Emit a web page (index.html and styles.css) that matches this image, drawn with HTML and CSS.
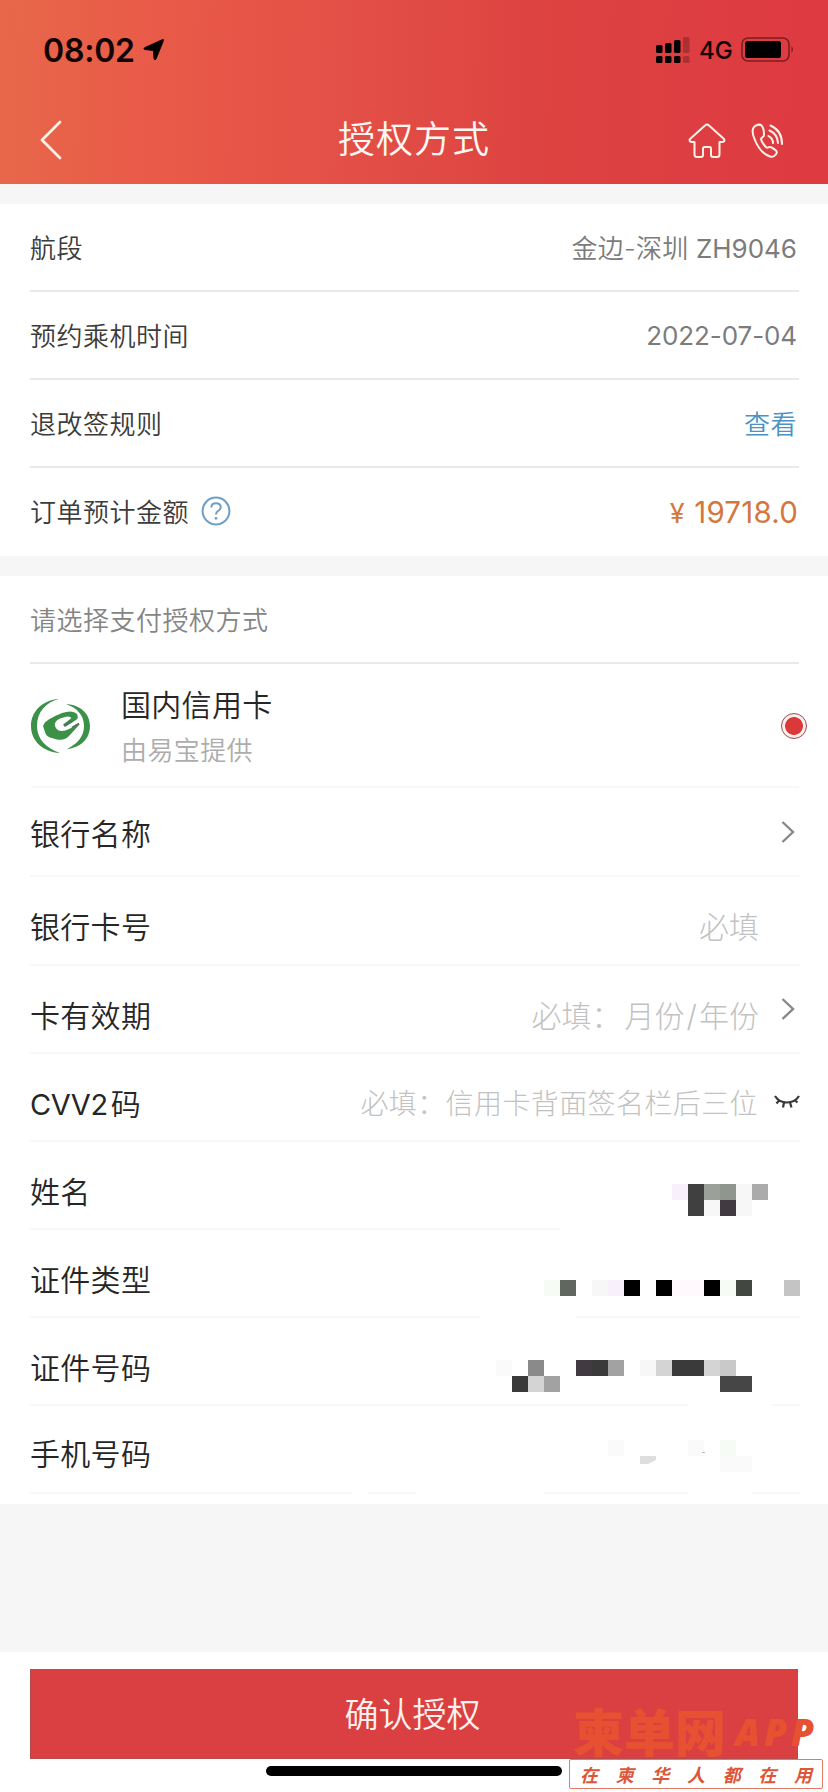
FILE: index.html
```html
<!DOCTYPE html>
<html lang="zh-CN">
<head>
<meta charset="utf-8">
<title>授权方式</title>
<link rel="stylesheet" href="styles.css">
</head>
<body>
<div class="screen">
  <header class="header">
    <div class="status">
      <span class="clock">08:02</span>
      <svg class="locate" width="22" height="22" viewBox="0 0 22 22"><path d="M20.500 1.500 13 20Q11.800 22 11 19.500L10.500 11.500 2 10.500Q0 9.800 1.500 8.800L19 .8Q21.200.200 20.500 1.500Z" stroke="#120303" stroke-width="1"/></svg>
      <svg class="signal" width="34" height="27" viewBox="0 0 34 27"><g><rect x="0" y="8" width="6.500" height="8" rx="1.500"/><rect x="9" y="6" width="6.500" height="10" rx="1.500"/><rect x="18" y="3" width="6.500" height="13" rx="1.500"/><rect x="0" y="19" width="6.500" height="7" rx="1.500"/><rect x="9" y="19" width="6.500" height="7" rx="1.500"/><rect x="18" y="19" width="6.500" height="7" rx="1.500"/></g><g opacity=".22"><rect x="27" y="0" width="6.500" height="16" rx="1.500"/><rect x="27" y="19" width="6.500" height="7" rx="1.500"/></g></svg>
      <span class="network">4G</span>
      <svg class="battery" width="54" height="26" viewBox="0 0 54 26"><rect x="1" y="1" width="47" height="23" rx="6" fill="none" stroke="#7c1d20" stroke-width="1.600"/><rect x="4" y="4" width="36" height="17" rx="2.500"/><path d="M50.500 9Q53.500 12.500 50.500 16Z" fill="#7c1d20"/></svg>
    </div>
    <nav class="nav">
      <svg class="back" width="24" height="42" viewBox="0 0 24 42"><path d="M21 3 3 21 21 39"/></svg>
      <h1 class="title">授权方式</h1>
      <div class="tools">
        <svg width="38" height="36" viewBox="0 0 38 36"><path d="M19 1.500Q20 1.500 21 2.500L36 16Q37.300 18.500 34.500 19H31.500V31.500Q31.500 34 29 34H25Q23 34 23 32V25.500Q23 24 21.500 24H16.500Q15 24 15 25.500V32Q15 34 13 34H9Q6.500 34 6.500 31.500V19H3.500Q.700 18.500 2 16L17 2.500Q18 1.500 19 1.500Z"/></svg>
        <svg width="34" height="36" viewBox="0 0 34 36"><path d="M5 2.500C1 4.500 1 10 3.500 16C7 25 13 31.500 19 33.500C22 34.500 25 32.500 25.800 29.500C26 27.500 24.500 26.500 20.500 24.500C17.500 23 17 25.500 15.500 24.500C13.500 23 10.500 18.500 10 16C10 14 13 14.500 13 12C13 8 12 4 10.500 2.500C9 1.200 7 1.500 5 2.500ZM17.500 13Q22 15.500 22 20M18.500 7.500Q26.500 11 27 20M19.500 2.500Q31 7.500 31 21"/></svg>
      </div>
    </nav>
  </header>

  <section class="panel trip">
    <div class="row"><span>航段</span><span class="value">金边-深圳 <b>ZH9046</b></span></div>
    <div class="row"><span>预约乘机时间</span><span class="value date">2022-07-04</span></div>
    <div class="row"><span>退改签规则</span><a class="link">查看</a></div>
    <div class="row"><span class="with-help">订单预计金额<svg width="30" height="30" viewBox="0 0 30 30"><circle cx="15" cy="15" r="13.400"/><path d="M10.300 11.500Q10.300 7.200 15 7.200Q19.700 7.200 19.700 11.200Q19.700 13.600 17 15Q15 16.200 15 18.600"/><circle class="dot" cx="15" cy="22.300" r="1.400"/></svg></span><span class="amount"><span class="yen">¥</span> 19718.0</span></div>
  </section>

  <section class="panel pay">
    <div class="row heading">请选择支付授权方式</div>
    <div class="method">
      <svg class="logo" width="60" height="56" viewBox="0 0 60 56"><path d="M28 1C12 2 0 13 0 28C0 43 12 54 29 55C15 50 6 41 6 28C6 14 15 4 28 1ZM35 6C50 7 59 16 59 28C59 41 49 50 36 51C46 46 53 39 53 28C53 17 46 10 35 6Z"/><path d="M13 26Q15 21.500 31 15Q42 11.500 46 16Q48 20 45 22L34.500 28.800 32 26.500 40 20.500Q40.500 18.500 36 18.500L29 20.500Q23 23 24 28Q25.500 33 31 33Q37 33 47.500 25L48.500 26.500 38 38Q33 43 26 41.500L19 39.500Q15 38 14 34L12 28Z"/><path d="M33 28 41.500 22.500M41 29.500 48 25.500" stroke="#57705c" stroke-width="1.600"/></svg>
      <div class="method-text"><strong>国内信用卡</strong><small>由易宝提供</small></div>
      <span class="radio"></span>
    </div>
    <div class="field first"><label>银行名称</label><svg class="chevron" width="14" height="22" viewBox="0 0 14 22"><path d="M1.500 1 12 11 1.500 21"/></svg></div>
    <div class="field number"><label>银行卡号</label><span class="hint">必填</span></div>
    <div class="field"><label>卡有效期</label><span class="hint">必填：<i class="month">月份</i><i class="slash">/</i>年份</span><svg class="chevron raised" width="14" height="22" viewBox="0 0 14 22"><path d="M1.500 1 12 11 1.500 21"/></svg></div>
    <div class="field"><label><b>CVV2</b>码</label><span class="hint small">必填：信用卡背面签名栏后三位</span><svg class="eye" width="26" height="16" viewBox="0 0 26 16"><path d="M1 2Q5 8.500 13 8.500Q21 8.500 25 2M5.500 6 2.500 9.500M10 8.500 9 13.500M16 8.500 17.500 13.500M20.500 6 23.500 8.500"/></svg></div>
    <div class="field"><label>姓名</label></div>
    <div class="field"><label>证件类型</label></div>
    <div class="field"><label>证件号码</label></div>
    <div class="field last"><label>手机号码</label></div>
    <svg class="mosaic" width="348" height="324" viewBox="480 1180 348 324" shape-rendering="crispEdges">
      <path fill="#fff" d="M560 1227H800V1230H560ZM480 1315H576V1318H480ZM688 1403H772V1406H688ZM480 1491H544V1494H480ZM688 1491H752V1494H688Z"/>
      <path fill="#f8f0fa" d="M672 1184h16v16h-16zM608 1280h16v16h-16z"/>
      <path fill="#404040" d="M688 1184h16v32h-16z"/><path fill="#9ba199" d="M704 1184h16v16h-16z"/><path fill="#8f968e" d="M720 1184h16v16h-16z"/>
      <path fill="#f7f7f7" d="M736 1184h16v32h-16zM704 1200h16v16h-16zM592 1280h16v16h-16zM640 1360h16v16h-16z"/>
      <path fill="#ababab" d="M752 1184h16v16h-16z"/><path fill="#413a41" d="M720 1200h16v16h-16zM576 1360h16v16h-16z"/>
      <path fill="#f6fcf4" d="M544 1280h16v16h-16zM720 1280h16v16h-16zM720 1440h16v16h-16z"/>
      <path fill="#60675f" d="M560 1280h16v16h-16z"/><path fill="#fff9fd" d="M672 1280h32v16h-32z"/>
      <path fill="#000" d="M624 1280h16v16h-16zM656 1280h16v16h-16zM704 1280h16v16h-16z"/>
      <path fill="#42473f" d="M736 1280h16v16h-16z"/><path fill="#c4c4c4" d="M784 1280h16v16h-16z"/>
      <path fill="#fafafa" d="M496 1360h16v16h-16zM608 1440h16v16h-16zM688 1440h16v16h-16zM720 1456h32v16h-32z"/>
      <path fill="#8a8a8a" d="M528 1360h16v16h-16z"/><path fill="#3a3a3a" d="M592 1360h16v16h-16zM672 1360h32v16h-32zM512 1376h16v16h-16z"/>
      <path fill="#a2a2a2" d="M608 1360h16v16h-16zM544 1376h16v16h-16z"/><path fill="#d4d4d4" d="M656 1360h16v16h-16zM704 1360h16v16h-16zM528 1376h16v16h-16z"/><path fill="#c9c9c9" d="M720 1360h16v16h-16z"/>
      <path fill="#464646" d="M720 1376h32v16h-32z"/><path fill="#dedede" d="M640 1456h16v4l-8 4h-8z"/><path fill="#bbb" d="M702 1452h3v1h-3z"/>
    </svg>
    <span class="line-gap narrow"></span><span class="line-gap wide"></span>
  </section>

  <footer class="footer">
    <button class="confirm">确认授权</button>
    <div class="home-bar"></div>
    <div class="brand"><span class="brand-name">柬单网</span><span class="brand-app">APP</span></div>
    <div class="slogan"><span>在</span><span>柬</span><span>华</span><span>人</span><span>都</span><span>在</span><span>用</span></div>
  </footer>
</div>
</body>
</html>
```
FILE: styles.css
```css
* { box-sizing: border-box; }
body { margin: 0; background: #f6f6f6; font-family: Inter, "Noto Sans CJK SC", sans-serif; }
.screen { width: 828px; height: 1792px; display: flex; flex-direction: column; overflow: hidden; background: #f6f6f6; }

.header { height: 184px; flex: none; background: linear-gradient(92deg, #e7674a 0%, #e95b48 18%, #e34f47 43%, #dd4341 65%, #dd3a41 100%); }
.status { height: 94px; display: flex; align-items: center; padding: 6px 33px 0 43px; color: #120303; }
.clock { font-size: 32px; font-weight: 600; letter-spacing: -.2px; }
.locate { margin-left: 8px; }
.signal { margin-left: auto; }
.network { font-size: 24px; font-weight: 500; margin: 0 9px 0 9px; width: 33px; }
.nav { height: 90px; display: flex; align-items: center; justify-content: space-between; padding: 2px 43px 0 39px; }
.nav svg { fill: none; stroke: #fff0e8; stroke-width: 2; stroke-linejoin: round; stroke-linecap: round; }
.nav .back { stroke-width: 2.8; }
.title { margin: 0 0 0 77px; font-size: 37px; font-weight: 350; letter-spacing: 1px; color: #fff8f2; line-height: 44px; }
.tools { display: flex; gap: 25px; margin-top: 1px; }

.panel { background: #fff; flex: none; color: #3c3c3c; position: relative; }
.trip { margin-top: 20px; }
.pay { margin-top: 20px; height: 928px; }
.row { height: 88px; margin: 0 29px 0 30px; padding-bottom: 2px; display: flex; align-items: center; justify-content: space-between; border-bottom: 2px solid #e9e9e9; font-size: 26px; font-weight: 350; letter-spacing: .5px; }
.trip .row:last-child { border-bottom: 0; padding-bottom: 3px; }
.value { color: #7c7c7c; letter-spacing: .2px; padding-right: 2px; }
.value b { font-weight: 400; letter-spacing: 0; }
.date { font-weight: 400; letter-spacing: -.1px; padding-top: 2px; }
.link { color: #4a93c4; padding-right: 2px; }
.with-help { display: flex; align-items: center; gap: 12px; }
.with-help svg { fill: none; stroke: #6f9fc2; stroke-width: 2; }
.with-help .dot { fill: #6f9fc2; stroke: none; }
.amount { color: #d3773e; font-size: 29.5px; font-weight: 400; letter-spacing: .2px; padding: 3px 1px 0 0; }
.yen { font-size: 27px; margin-right: 1px; }
.heading { color: #858585; }

.method { height: 124px; margin: 0 29px 0 31px; display: flex; align-items: center; border-bottom: 2px solid #f8f8f8; }
.logo { fill: #3c9148; flex: none; margin-top: 1px; }
.method-text { display: flex; flex-direction: column; margin: 4px 0 0 30px; gap: 6px; }
.method-text strong { font-size: 30px; font-weight: 350; line-height: 42px; letter-spacing: .3px; color: #262626; }
.method-text small { font-size: 26px; font-weight: 350; line-height: 38px; letter-spacing: .4px; color: #adadad; }
.radio { width: 26px; height: 26px; margin: 1px -8px 0 auto; border: 1px solid #9c4a4f; border-radius: 50%; background: radial-gradient(circle, #d93a39 8.5px, #fcecec 9.3px); }
.field { height: 88px; margin: 0 28px 0 30px; display: flex; align-items: center; padding-top: 9px; border-bottom: 2px solid #f8f8f8; font-size: 30px; font-weight: 350; color: #262626; }
.field.first { height: 89px; padding-top: 1px; }
.field.number { height: 89px; }
.field.last { padding-top: 5px; }
.field label { letter-spacing: .3px; }
.field b { font-weight: 400; font-size: 29px; letter-spacing: -.4px; margin-right: 3px; }
.hint { margin: 0 41px 0 auto; color: #c2c2c2; letter-spacing: 0; font-weight: 300; }
.hint i { font-style: normal; }
.hint .month { margin-left: 3px; }
.hint .slash { margin: 0 2px; }
.hint.small { font-size: 28px; letter-spacing: .4px; }
.chevron { margin-left: auto; margin-right: 5px; fill: none; stroke: #888; stroke-width: 2.4; }
.hint + .chevron { margin-left: -19px; }
.hint + .eye { margin-left: -25px; }
.chevron.raised { margin-top: -10px; }
.eye { fill: none; stroke: #383838; stroke-width: 2.2; }
.mosaic { position: absolute; left: 480px; top: 604px; }
.line-gap { position: absolute; top: 915px; height: 4px; background: #fff; }
.narrow { left: 352px; width: 16px; }
.wide { left: 416px; width: 66px; }

.footer { position: relative; margin-top: auto; height: 140px; padding: 17px 30px 0; background: #fff; display: flex; flex-direction: column; align-items: center; }
.confirm { width: 768px; height: 90px; flex: none; border: 1px solid #b84c4d; background: #da4041; color: #fff2ee; font: 350 34px/40px "Noto Sans CJK SC", sans-serif; padding: 0 3px 2px 0; }
.home-bar { width: 296px; height: 10px; margin-top: 7px; border-radius: 5px; background: #000; }
.brand { position: absolute; left: 573px; top: 45px; display: flex; align-items: center; color: #e75131; line-height: 60px; white-space: nowrap; }
.brand-name { font: 900 51px/60px "Noto Sans CJK SC", sans-serif; }
.brand-app { font: italic 800 37px/60px "Open Sans", sans-serif; letter-spacing: 4px; margin: 5px 0 0 9px; }
.slogan { position: absolute; left: 569px; top: 107px; width: 254px; height: 30px; padding: 0 10px; display: flex; justify-content: space-between; align-items: center; border: 1px solid #e37a63; border-radius: 2px; background: #fff; color: #dc5639; font: italic 700 18px/24px "Noto Sans CJK SC", sans-serif; }
```
